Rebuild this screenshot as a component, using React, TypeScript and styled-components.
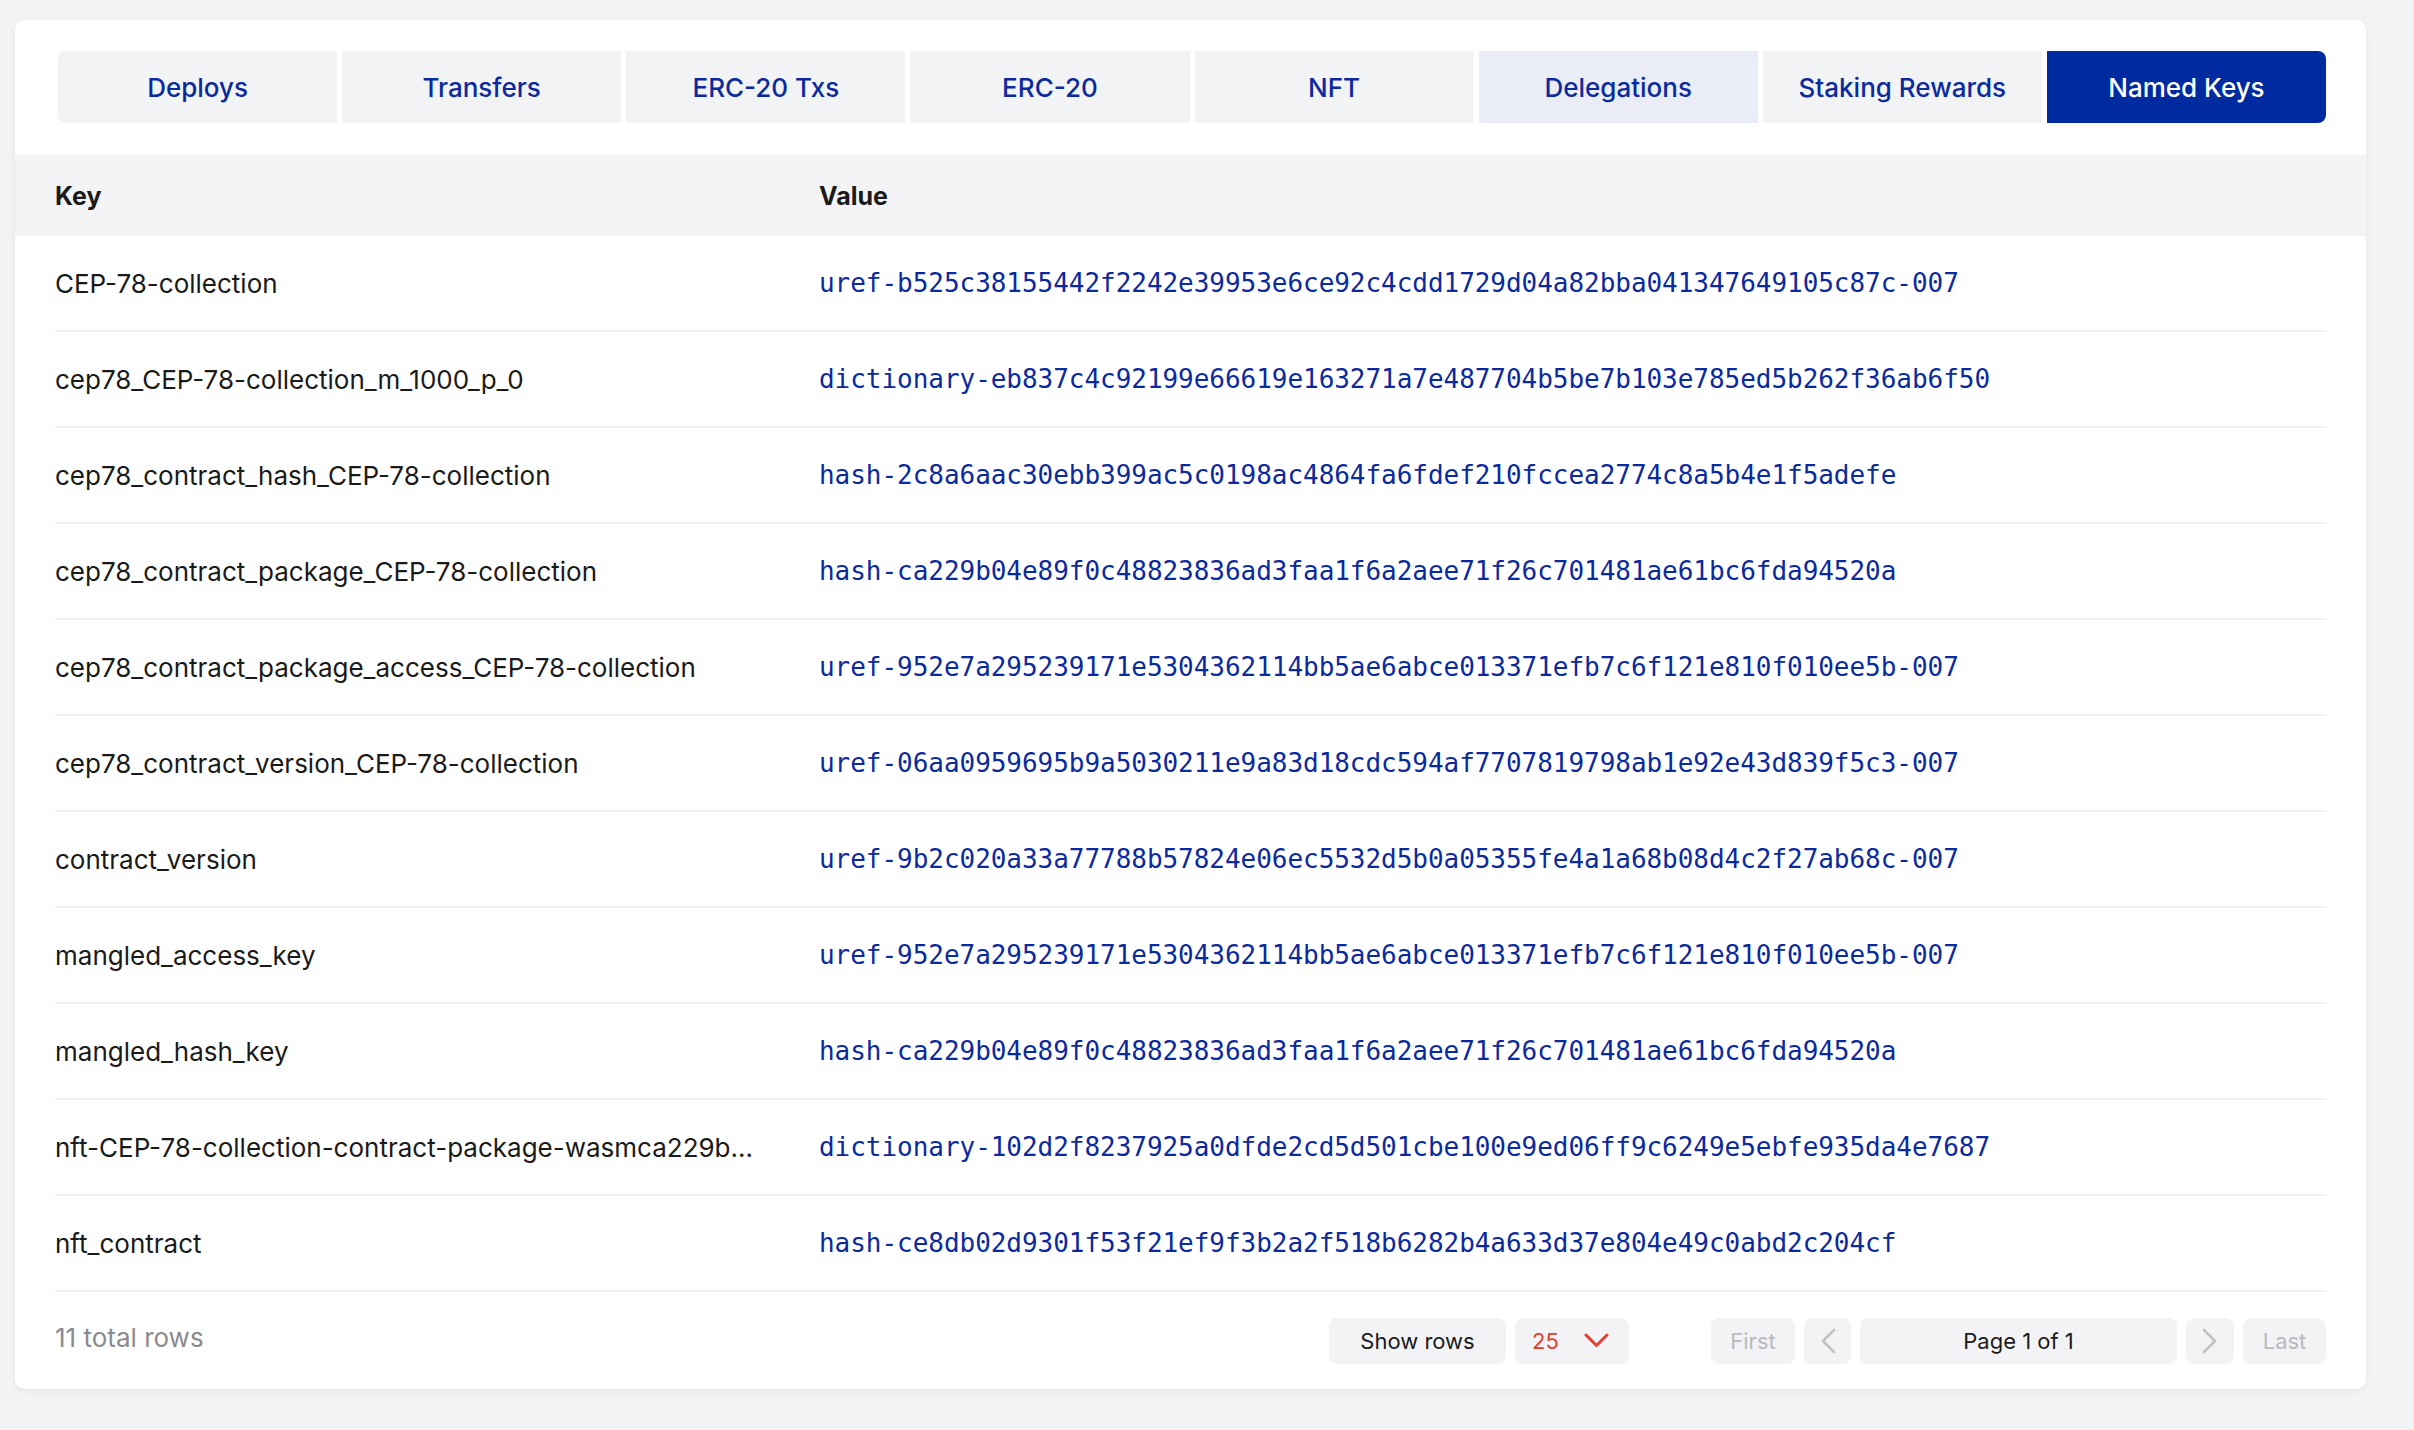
import React from "react";
import styled, { createGlobalStyle } from "styled-components";

const Global = createGlobalStyle`
  html, body { margin: 0; padding: 0; background: #f2f3f5; }
  body { font-family: Inter, "Noto Sans", sans-serif; color: #1a1a1a; }
  * { box-sizing: border-box; }
`;

const Page = styled.div`
  padding: 20px 48px 43px 15px;
  min-height: 1430px;
`;

const Card = styled.div`
  background: #ffffff;
  border-radius: 10px;
  box-shadow: 0 2px 6px rgba(20, 20, 40, 0.06);
  padding-top: 31px;
  overflow: hidden;
`;

const Tabs = styled.div`
  display: grid;
  grid-template-columns: repeat(8, 1fr);
  gap: 5px;
  margin: 0 40px 32px 43px;
  border-radius: 8px;
  overflow: hidden;
`;

const Tab = styled.button<{ $active?: boolean; $hover?: boolean }>`
  height: 72px;
  border: none;
  font-family: Inter, sans-serif;
  font-size: 26px;
  font-weight: 500;
  cursor: pointer;
  background: ${(p) => (p.$active ? "#002aa0" : p.$hover ? "#eaedf6" : "#f2f3f5")};
  color: ${(p) => (p.$active ? "#ffffff" : "#0b2a9e")};
`;

const HeaderRow = styled.div`
  display: grid;
  grid-template-columns: 764px 1fr;
  height: 81px;
  align-items: center;
  background: #f4f4f6;
  padding: 0 40px;
  font-size: 25px;
  font-weight: 700;
  color: #1a1a1a;
`;

const Body = styled.div`
  padding: 0 40px;
`;

const Row = styled.div`
  display: grid;
  grid-template-columns: 764px 1fr;
  height: 96px;
  align-items: center;
  border-bottom: 2px solid #f1f1f3;
`;

const KeyCell = styled.div`
  font-size: 26px;
  color: #1a1a1a;
  white-space: nowrap;
  overflow: hidden;
  text-overflow: ellipsis;
  padding-right: 54px;
`;

const ValueCell = styled.a`
  font-family: "DejaVu Sans Mono", "Liberation Mono", monospace;
  font-size: 26px;
  letter-spacing: -0.04px;
  color: #0b2a9e;
  text-decoration: none;
  white-space: nowrap;
`;

const Footer = styled.div`
  display: flex;
  align-items: center;
  height: 97px;
  padding: 0 40px;
`;

const Total = styled.div`
  font-size: 26px;
  color: #8a8a90;
  flex: 1;
  margin-top: -6px;
`;

const Controls = styled.div`
  display: flex;
  align-items: center;
  gap: 9px;
`;

const Btn = styled.button<{ $w: number; $muted?: boolean; $red?: boolean }>`
  height: 46px;
  width: ${(p) => p.$w}px;
  border: none;
  border-radius: 8px;
  background: #f3f3f5;
  font-family: Inter, sans-serif;
  font-size: 22px;
  color: ${(p) => (p.$red ? "#e0402d" : p.$muted ? "#b9b9bd" : "#1a1a1a")};
  display: flex;
  align-items: center;
  justify-content: ${(p) => (p.$red ? "space-between" : "center")};
  padding: ${(p) => (p.$red ? "0 20px 0 17px" : "0")};
`;

const Spacer = styled.div<{ $w: number }>`
  width: ${(p) => p.$w}px;
`;

const ChevronDown = ({ color }: { color: string }) => (
  <svg width={25} height={15} viewBox="0 0 25 15" fill="none">
    <path d="M2 2 L12.5 12.5 L23 2" stroke={color} strokeWidth={3} strokeLinecap="round" strokeLinejoin="round" />
  </svg>
);

const ChevronSide = ({ dir, color }: { dir: "left" | "right"; color: string }) => (
  <svg width={16} height={26} viewBox="0 0 16 26" fill="none">
    <path
      d={dir === "left" ? "M14 2 L3 13 L14 24" : "M2 2 L13 13 L2 24"}
      stroke={color}
      strokeWidth={2.6}
      strokeLinecap="round"
      strokeLinejoin="round"
    />
  </svg>
);

const tabs = ["Deploys", "Transfers", "ERC-20 Txs", "ERC-20", "NFT", "Delegations", "Staking Rewards", "Named Keys"];

const rows: [string, string][] = [
  ["CEP-78-collection", "uref-b525c38155442f2242e39953e6ce92c4cdd1729d04a82bba041347649105c87c-007"],
  ["cep78_CEP-78-collection_m_1000_p_0", "dictionary-eb837c4c92199e66619e163271a7e487704b5be7b103e785ed5b262f36ab6f50"],
  ["cep78_contract_hash_CEP-78-collection", "hash-2c8a6aac30ebb399ac5c0198ac4864fa6fdef210fccea2774c8a5b4e1f5adefe"],
  ["cep78_contract_package_CEP-78-collection", "hash-ca229b04e89f0c48823836ad3faa1f6a2aee71f26c701481ae61bc6fda94520a"],
  ["cep78_contract_package_access_CEP-78-collection", "uref-952e7a295239171e5304362114bb5ae6abce013371efb7c6f121e810f010ee5b-007"],
  ["cep78_contract_version_CEP-78-collection", "uref-06aa0959695b9a5030211e9a83d18cdc594af7707819798ab1e92e43d839f5c3-007"],
  ["contract_version", "uref-9b2c020a33a77788b57824e06ec5532d5b0a05355fe4a1a68b08d4c2f27ab68c-007"],
  ["mangled_access_key", "uref-952e7a295239171e5304362114bb5ae6abce013371efb7c6f121e810f010ee5b-007"],
  ["mangled_hash_key", "hash-ca229b04e89f0c48823836ad3faa1f6a2aee71f26c701481ae61bc6fda94520a"],
  [
    "nft-CEP-78-collection-contract-package-wasmca229b04e89f0c48823836ad3faa1f6a2aee71f26c701481ae61bc6fda94520a",
    "dictionary-102d2f8237925a0dfde2cd5d501cbe100e9ed06ff9c6249e5ebfe935da4e7687",
  ],
  ["nft_contract", "hash-ce8db02d9301f53f21ef9f3b2a2f518b6282b4a633d37e804e49c0abd2c204cf"],
];

export default function App() {
  return (
    <>
      <Global />
      <Page>
        <Card>
          <Tabs>
            {tabs.map((t) => (
              <Tab key={t} $active={t === "Named Keys"} $hover={t === "Delegations"}>
                {t}
              </Tab>
            ))}
          </Tabs>
          <HeaderRow>
            <div>Key</div>
            <div>Value</div>
          </HeaderRow>
          <Body>
            {rows.map(([k, v], i) => (
              <Row key={i}>
                <KeyCell>{k}</KeyCell>
                <ValueCell href="#">{v}</ValueCell>
              </Row>
            ))}
          </Body>
          <Footer>
            <Total>11 total rows</Total>
            <Controls>
              <Btn $w={177}>Show rows</Btn>
              <Btn $w={114} $red>
                <span>25</span>
                <ChevronDown color="#e0402d" />
              </Btn>
              <Spacer $w={64} />
              <Btn $w={84} $muted>First</Btn>
              <Btn $w={47}>
                <ChevronSide dir="left" color="#c2c2c6" />
              </Btn>
              <Btn $w={317}>Page 1 of 1</Btn>
              <Btn $w={48}>
                <ChevronSide dir="right" color="#c2c2c6" />
              </Btn>
              <Btn $w={83} $muted>Last</Btn>
            </Controls>
          </Footer>
        </Card>
      </Page>
    </>
  );
}
